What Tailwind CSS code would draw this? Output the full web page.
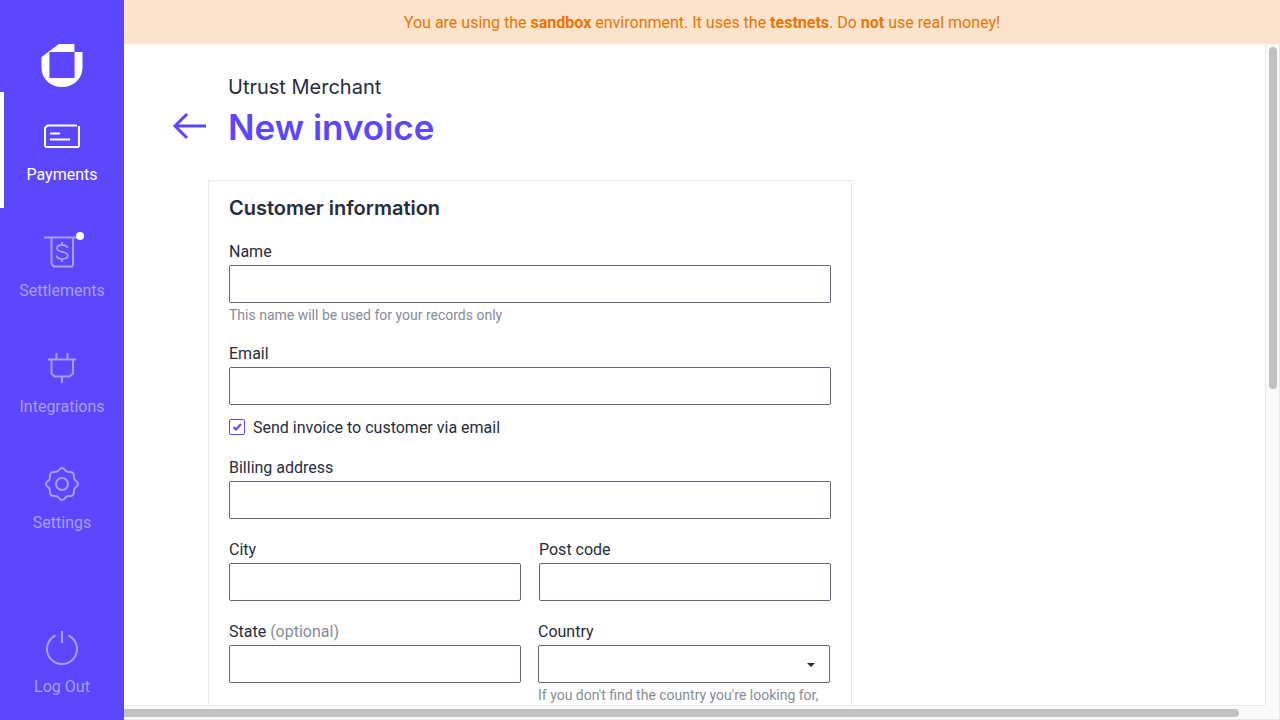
<!DOCTYPE html>
<html lang="en">
<head>
<meta charset="utf-8">
<meta name="viewport" content="width=device-width, initial-scale=1">
<title>New invoice</title>
<script src="https://cdn.jsdelivr.net/npm/@tailwindcss/browser@4"></script>
</head>
<body class="flex h-screen overflow-hidden bg-white font-['Roboto',sans-serif] text-base text-[#252d3d]">
<aside class="flex w-[124px] shrink-0 flex-col bg-[#5c47ff] text-white">
  <a href="#" aria-label="Utrust" class="flex h-[92px] shrink-0 justify-center pt-[43px]">
    <svg class="h-[46px] w-[42px]" viewBox="0 0 42 46" fill="#fff"><path fill-rule="evenodd" d="M.5 14L18 1H34V9H41.500V24C41.500 36 32.600 44 21 44S.5 36 .5 24ZM9 9V35H33V9Z"/><path d="M8.500 9V35M33.500 1V35" stroke="#9d90ff"/></svg>
  </a>
  <nav class="flex grow flex-col text-center leading-6">
    <a href="#" aria-current="page" class="flex h-[116px] flex-col items-center gap-[7px] border-l-4 border-white pt-6 pr-1">
      <svg class="size-10" viewBox="0 0 40 40" fill="none" stroke="#fff" stroke-width="2"><path d="M6 9.500H35M37 10V30L36 31H4L3 30V12L6 9M8 17.500H18M8 23.500H28"/></svg>
      <span>Payments</span>
    </a>
    <a href="#" class="flex h-[116px] flex-col items-center gap-[7px] pt-6 text-[#a99eff]">
      <svg class="size-10 overflow-visible" viewBox="0 0 40 40" fill="none" stroke="currentColor" stroke-width="2"><path d="M2 5.500H35M9.500 5V32M31 5V34M9.500 32L12 34.500H31"/><path stroke-width="1.800" d="M20 10V13M20 27V30M25.500 16C25 14 23 13 20 13C17 13 15 14.300 15 16.500C15 21 25.800 18.500 25.800 23.500C25.800 26 23.500 27 20 27C17 27 15 26 14.500 23.500"/><circle cx="38" cy="4" r="4" fill="#fff" stroke="none" /></svg>
      <span>Settlements</span>
    </a>
    <a href="#" class="flex h-[116px] flex-col items-center gap-[7px] pt-6 text-[#a99eff]">
      <svg class="size-10" viewBox="0 0 40 40" fill="none" stroke="currentColor" stroke-width="2"><path d="M14.500 5V11M25.500 5V11M6 11.500H34M9.500 11V25.500L12.500 28.500H27.500L31 25.500V11M20 28V35"/></svg>
      <span>Integrations</span>
    </a>
    <a href="#" class="flex h-[116px] flex-col items-center gap-[7px] pt-6 text-[#a99eff]">
      <svg class="size-10" viewBox="0 0 40 40" fill="none" stroke="currentColor" stroke-width="2"><path d="M20 4C22 4 22.500 5 23.500 6.500C24.500 8 25.500 8 27 8C30.500 7.500 32.500 9.500 32 13C32 14.500 32 15.500 33.500 16.500C35 17.500 36 18 36 20C36 22 35 22.500 33.500 23.500C32 24.500 32 25.500 32 27C32.500 30.500 30.500 32.500 27 32C25.500 32 24.500 32 23.500 33.500C22.500 35 22 36 20 36C18 36 17.500 35 16.500 33.500C15.500 32 14.500 32 13 32C9.500 32.500 7.500 30.500 8 27C8 25.500 8 24.500 6.500 23.500C5 22.500 4 22 4 20C4 18 5 17.500 6.500 16.500C8 15.500 8 14.500 8 13C7.500 9.500 9.500 7.500 13 8C14.500 8 15.500 8 16.500 6.500C17.500 5 18 4 20 4Z"/><circle cx="20" cy="20" r="6"/></svg>
      <span>Settings</span>
    </a>
    <button type="button" class="mt-auto flex h-[116px] flex-col items-center gap-[7px] pt-6 text-[#a99eff]">
      <svg class="size-10" viewBox="0 0 40 40" fill="none" stroke="currentColor" stroke-width="2"><path d="M20 3V15M26.500 7.500A15 15 0 1 1 13.500 7.500"/></svg>
      <span>Log Out</span>
    </button>
  </nav>
</aside>
<div class="flex min-w-0 grow flex-col">
  <p class="h-11 shrink-0 bg-[#fce4cc] text-center leading-[46px] text-[#ec7405]">You are using the <b>sandbox</b> environment. It uses the <b>testnets</b>. Do <b>not</b> use real money!</p>
  <div class="flex min-h-0 grow">
    <main class="min-w-0 grow overflow-hidden pt-[30px]">
      <header class="flex items-end gap-[20px] pl-12 font-['Inter',sans-serif]">
        <a href="#" aria-label="Back" class="mb-[10px] text-[#5c47ff]">
          <svg class="h-9 w-9" viewBox="0 0 36 36" fill="none" stroke="currentColor" stroke-width="3"><path d="M34 18H3M15 6L3 18L15 30"/></svg>
        </a>
        <div>
          <p class="text-xl leading-[26px]">Utrust Merchant</p>
          <h1 class="text-[35px] leading-[54px] font-semibold text-[#5c47ff]">New invoice</h1>
        </div>
      </header>
      <form class="mt-[26px] ml-[84px] w-full max-w-[644px] border border-[#e6e7e9] px-5 pt-[15px] pb-5">
        <h2 class="font-['Inter',sans-serif] text-xl leading-6 font-semibold">Customer information</h2>
        <div class="mt-[19px]">
          <label for="name" class="block leading-[26px]">Name</label>
          <input id="name" type="text" class="block h-[38px] w-full rounded-xs border border-[#626778] px-3">
          <p class="mt-0.5 text-sm leading-5 text-[#878c97]">This name will be used for your records only</p>
        </div>
        <div class="mt-4">
          <label for="email" class="block leading-[26px]">Email</label>
          <input id="email" type="email" class="block h-[38px] w-full rounded-xs border border-[#626778] px-3">
          <label class="mt-[10px] flex items-start gap-2 leading-[26px]">
            <span class="mt-1 grid size-4">
              <input type="checkbox" checked class="peer col-start-1 row-start-1 size-4 appearance-none rounded-xs border border-[#5c47ff]">
              <svg class="pointer-events-none invisible col-start-1 row-start-1 size-4 peer-checked:visible" viewBox="0 0 16 16" fill="none" stroke="#5c47ff" stroke-width="2"><path d="M4.500 8L7 10.500L12 5"/></svg>
            </span>
            Send invoice to customer via email
          </label>
        </div>
        <div class="mt-[14px]">
          <label for="address" class="block leading-[26px]">Billing address</label>
          <input id="address" type="text" class="block h-[38px] w-full rounded-xs border border-[#626778] px-3">
        </div>
        <div class="mt-[18px] grid grid-cols-2 gap-[18px]">
          <div>
            <label for="city" class="block leading-[26px]">City</label>
            <input id="city" type="text" class="block h-[38px] w-full rounded-xs border border-[#626778] px-3">
          </div>
          <div>
            <label for="post" class="block leading-[26px]">Post code</label>
            <input id="post" type="text" class="block h-[38px] w-full rounded-xs border border-[#626778] px-3">
          </div>
        </div>
        <div class="mt-[18px] grid grid-cols-2 gap-[17px] pr-px">
          <div>
            <label for="state" class="block leading-[26px]">State <span class="text-[#878c97]">(optional)</span></label>
            <input id="state" type="text" class="block h-[38px] w-full rounded-xs border border-[#626778] px-3">
          </div>
          <div>
            <label for="country" class="block leading-[26px]">Country</label>
            <div class="grid items-center">
              <select id="country" class="col-start-1 row-start-1 h-[38px] w-full appearance-none rounded-xs border border-[#626778] bg-transparent px-3"><option></option></select>
              <svg class="pointer-events-none col-start-1 row-start-1 mt-0.5 mr-[15px] h-1 w-2 justify-self-end" viewBox="0 0 8 4" fill="#252d3d"><path d="M0 0H8L4 4Z"/></svg>
            </div>
            <p class="mt-0.5 text-sm leading-5 text-[#878c97]">If you don't find the country you're looking for,</p>
          </div>
        </div>
      </form>
    </main>
    <div class="w-[15px] shrink-0 border-x border-[#e8e8e8] bg-[#fafafa] px-0.5 pt-[3px]"><div class="ml-px h-[342px] w-2 rounded-full bg-[#c1c1c1]"></div></div>
  </div>
  <div class="flex h-[15px] shrink-0 bg-[#fafafa]">
    <div class="grow border-y border-[#e8e8e8] pt-[3px]"><div class="mr-[26px] h-2 rounded-r-full bg-[#c1c1c1]"></div></div>
    <div class="w-[15px] border-r border-b border-[#e8e8e8]"></div>
  </div>
</div>
</body>
</html>
